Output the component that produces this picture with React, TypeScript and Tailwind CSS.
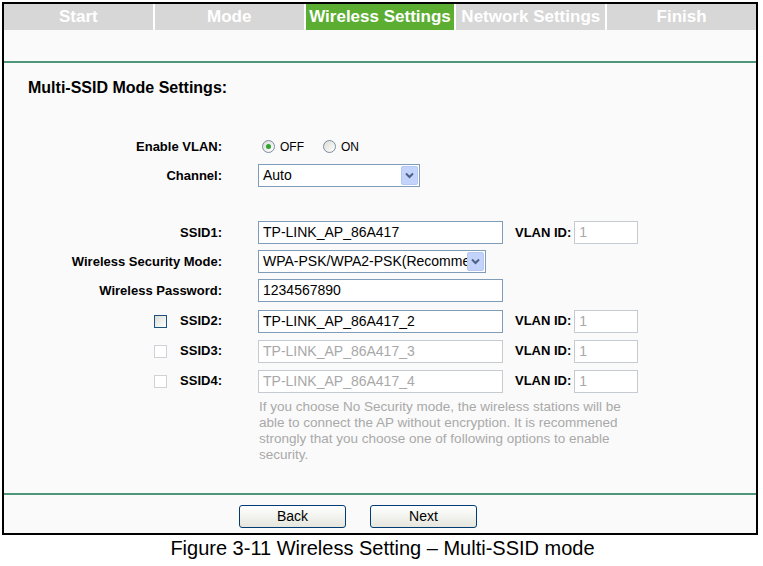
import React from "react";

const tabs = ["Start", "Mode", "Wireless Settings", "Network Settings", "Finish"];

const Chevron: React.FC = () => (
  <svg width="9" height="7" viewBox="0 0 9 7">
    <path d="M1 1.5 L4.5 5 L8 1.5" fill="none" stroke="#4d6185" strokeWidth="2" />
  </svg>
);

const FakeSelect: React.FC<{ value: string; width: string }> = ({ value, width }) => (
  <div className={`flex h-[23px] ${width} items-center border border-[#7f9db9] bg-white pl-[4px] pr-[1px]`}>
    <span className="flex-1 overflow-hidden whitespace-nowrap text-[14px] text-black">{value}</span>
    <span className="flex h-[19px] w-[17px] items-center justify-center rounded-[2px] border border-[#b7c9f3] bg-[#c3d3fb]">
      <Chevron />
    </span>
  </div>
);

const TextBox: React.FC<{ value: string; width: string; disabled?: boolean }> = ({ value, width, disabled }) => (
  <div
    className={`flex h-[23px] ${width} items-center border px-[4px] text-[14px] whitespace-nowrap ${
      disabled ? "border-[#c6cbd2] bg-white text-[#a8a8a8]" : "border-[#7f9db9] bg-white text-black"
    }`}
  >
    {value}
  </div>
);

const Radio: React.FC<{ checked?: boolean }> = ({ checked }) => (
  <span className="flex h-[13px] w-[13px] items-center justify-center rounded-full border border-[#7a8ea3] bg-gradient-to-br from-[#dcdcd6] to-white">
    {checked && <span className="h-[5px] w-[5px] rounded-full bg-[#2fa32f]" />}
  </span>
);

const CheckBox: React.FC<{ disabled?: boolean }> = ({ disabled }) => (
  <span
    className={`h-[13px] w-[13px] border ${
      disabled ? "border-[#cfd2d6] bg-white" : "border-[#1c5180] bg-gradient-to-br from-[#dcdcd6] to-white"
    }`}
  />
);

const Row: React.FC<{ label: React.ReactNode; h?: string; children?: React.ReactNode }> = ({ label, h = "h-[29px]", children }) => (
  <div className={`flex ${h} items-center`}>
    <div className="flex w-[218px] items-center justify-end text-[13px] font-bold text-black">{label}</div>
    <div className="ml-[36px] flex items-center">{children}</div>
  </div>
);

const VlanId: React.FC = () => (
  <div className="ml-[12px] flex items-center">
    <span className="text-[13px] font-bold text-black">VLAN ID:</span>
    <div className="ml-[3px]">
      <TextBox value="1" width="w-[64px]" disabled />
    </div>
  </div>
);

export default function App() {
  return (
    <div className="h-[566px] w-[763px] bg-white pl-[2px] pt-[2px] font-['Liberation_Sans',Arial,sans-serif]">
      <div className="w-[756px] border-2 border-black bg-[#fafafa]">
        {/* steps */}
        <div className="grid h-[25px] grid-cols-5 gap-[2px] bg-white">
          {tabs.map((t, i) => (
            <div
              key={t}
              className={`flex items-center justify-center text-[17px] font-bold text-white ${
                i === 2 ? "bg-[#5cae32]" : "bg-[#d7d7d7]"
              }`}
            >
              {t}
            </div>
          ))}
        </div>
        <div className="h-[34px] border-b-2 border-[#4f977a]" />

        {/* body */}
        <div className="h-[432px] border-b-2 border-[#4f977a]">
          <div className="pl-[24px] pt-[16px] text-[16px] font-bold leading-[18px] text-black">Multi-SSID Mode Settings:</div>
          <div className="mt-[35px]">
            <Row label="Enable VLAN:">
              <div className="flex items-center gap-[5px] pl-[4px] text-[12px] text-black">
                <Radio checked />
                <span>OFF</span>
                <span className="ml-[9px]" />
                <Radio />
                <span>ON</span>
              </div>
            </Row>
            <Row label="Channel:">
              <FakeSelect value="Auto" width="w-[162px]" />
            </Row>
            <div className="h-[28px]" />
            <Row label="SSID1:">
              <TextBox value="TP-LINK_AP_86A417" width="w-[245px]" />
              <VlanId />
            </Row>
            <Row label="Wireless Security Mode:">
              <FakeSelect value="WPA-PSK/WPA2-PSK(Recommended)" width="w-[228px]" />
            </Row>
            <Row label="Wireless Password:">
              <TextBox value="1234567890" width="w-[245px]" />
            </Row>
            <Row
              h="h-[30px] mt-[1px]"
              label={
                <>
                  <CheckBox />
                  <span className="ml-[13px]">SSID2:</span>
                </>
              }
            >
              <TextBox value="TP-LINK_AP_86A417_2" width="w-[245px]" />
              <VlanId />
            </Row>
            <Row
              h="h-[30px]"
              label={
                <>
                  <CheckBox disabled />
                  <span className="ml-[13px]">SSID3:</span>
                </>
              }
            >
              <TextBox value="TP-LINK_AP_86A417_3" width="w-[245px]" disabled />
              <VlanId />
            </Row>
            <Row
              h="h-[30px]"
              label={
                <>
                  <CheckBox disabled />
                  <span className="ml-[13px]">SSID4:</span>
                </>
              }
            >
              <TextBox value="TP-LINK_AP_86A417_4" width="w-[245px]" disabled />
              <VlanId />
            </Row>
            <div className="ml-[255px] mt-[3px] w-[364px] text-[13.5px] leading-[16px] text-[#a9a9a9]">
              If you choose No Security mode, the wireless stations will be able to connect the AP without encryption. It is recommened
              strongly that you choose one of following options to enable security.
            </div>
          </div>
        </div>

        {/* buttons */}
        <div className="flex h-[38px] items-start pl-[235px] pt-[10px]">
          <button className="h-[23px] w-[107px] rounded-[3px] border border-[#003c74] bg-gradient-to-b from-white to-[#e6e6de] text-[14px] text-black">
            Back
          </button>
          <button className="ml-[24px] h-[23px] w-[107px] rounded-[3px] border border-[#003c74] bg-gradient-to-b from-white to-[#e6e6de] text-[14px] text-black">
            Next
          </button>
        </div>
      </div>
      <div className="mt-[1px] text-center text-[20px] leading-[24px] text-black">Figure 3-11 Wireless Setting – Multi-SSID mode</div>
    </div>
  );
}
